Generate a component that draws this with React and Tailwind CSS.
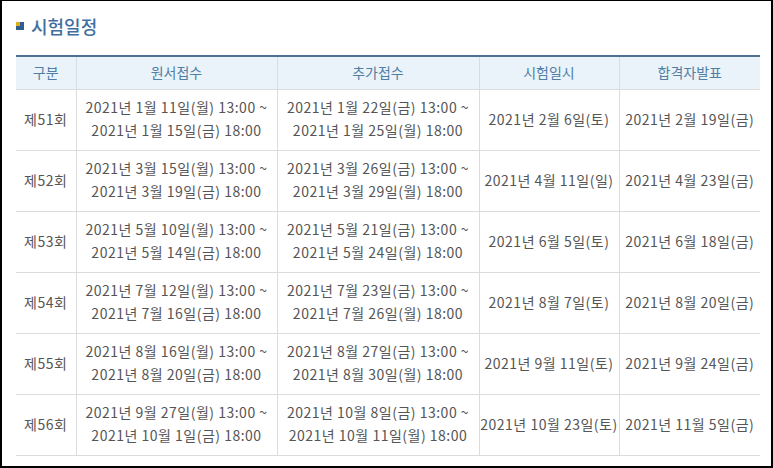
const rows = [
  ['제51회', ['2021년 1월 11일(월) 13:00 ~', '2021년 1월 15일(금) 18:00'], ['2021년 1월 22일(금) 13:00 ~', '2021년 1월 25일(월) 18:00'], '2021년 2월 6일(토)', '2021년 2월 19일(금)'],
  ['제52회', ['2021년 3월 15일(월) 13:00 ~', '2021년 3월 19일(금) 18:00'], ['2021년 3월 26일(금) 13:00 ~', '2021년 3월 29일(월) 18:00'], '2021년 4월 11일(일)', '2021년 4월 23일(금)'],
  ['제53회', ['2021년 5월 10일(월) 13:00 ~', '2021년 5월 14일(금) 18:00'], ['2021년 5월 21일(금) 13:00 ~', '2021년 5월 24일(월) 18:00'], '2021년 6월 5일(토)', '2021년 6월 18일(금)'],
  ['제54회', ['2021년 7월 12일(월) 13:00 ~', '2021년 7월 16일(금) 18:00'], ['2021년 7월 23일(금) 13:00 ~', '2021년 7월 26일(월) 18:00'], '2021년 8월 7일(토)', '2021년 8월 20일(금)'],
  ['제55회', ['2021년 8월 16일(월) 13:00 ~', '2021년 8월 20일(금) 18:00'], ['2021년 8월 27일(금) 13:00 ~', '2021년 8월 30일(월) 18:00'], '2021년 9월 11일(토)', '2021년 9월 24일(금)'],
  ['제56회', ['2021년 9월 27일(월) 13:00 ~', '2021년 10월 1일(금) 18:00'], ['2021년 10월 8일(금) 13:00 ~', '2021년 10월 11일(월) 18:00'], '2021년 10월 23일(토)', '2021년 11월 5일(금)'],
]

const heads = ['구분', '원서접수', '추가접수', '시험일시', '합격자발표']

export default function App() {
  return (
    <div
      className="h-[468px] w-[773px] border-l-2 border-r-2 border-t border-b-2 border-black bg-white"
      style={{ fontFamily: '"Noto Sans CJK KR", "Noto Sans", sans-serif' }}
    >
      <div className="flex items-center gap-[7px] pl-[14px] pt-[11px]">
        <span className="grid h-[8px] w-[8px] grid-cols-2 grid-rows-2 bg-[#2f5f8f]">
          <span className="bg-[#e0b020]" />
        </span>
        <h1 className="text-[18px] leading-[28px] font-medium text-[#3f6f9f]">시험일정</h1>
      </div>
      <table className="ml-[14px] mt-[15px] w-[744px] table-fixed border-collapse text-[14px] tracking-[0.5px] text-[#555]">
        <colgroup>
          <col className="w-[60px]" />
          <col className="w-[201px]" />
          <col className="w-[202px]" />
          <col className="w-[140px]" />
          <col className="w-[141px]" />
        </colgroup>
        <thead>
          <tr className="h-[33px] border-t-2 border-[#4d7191] bg-[#eaf3f9]">
            {heads.map((h, i) => (
              <th
                key={h}
                className={`text-center font-normal tracking-normal text-[#4f7ea6] ${i > 0 ? 'border-l border-[#d3dfe8]' : ''}`}
              >
                {h}
              </th>
            ))}
          </tr>
        </thead>
        <tbody>
          {rows.map((r) => (
            <tr key={r[0]} className="h-[61px] border-t border-[#dcdcdc]">
              <td className="text-center">{r[0]}</td>
              {[r[1], r[2]].map((c, i) => (
                <td key={i} className="border-l border-[#dcdcdc] pb-[2px] text-center leading-[23px]">
                  {c[0]}
                  <br />
                  {c[1]}
                </td>
              ))}
              <td className="border-l border-[#dcdcdc] text-center">{r[3]}</td>
              <td className="border-l border-[#dcdcdc] text-center">{r[4]}</td>
            </tr>
          ))}
          <tr className="border-t border-[#dcdcdc]" />
        </tbody>
      </table>
    </div>
  )
}
